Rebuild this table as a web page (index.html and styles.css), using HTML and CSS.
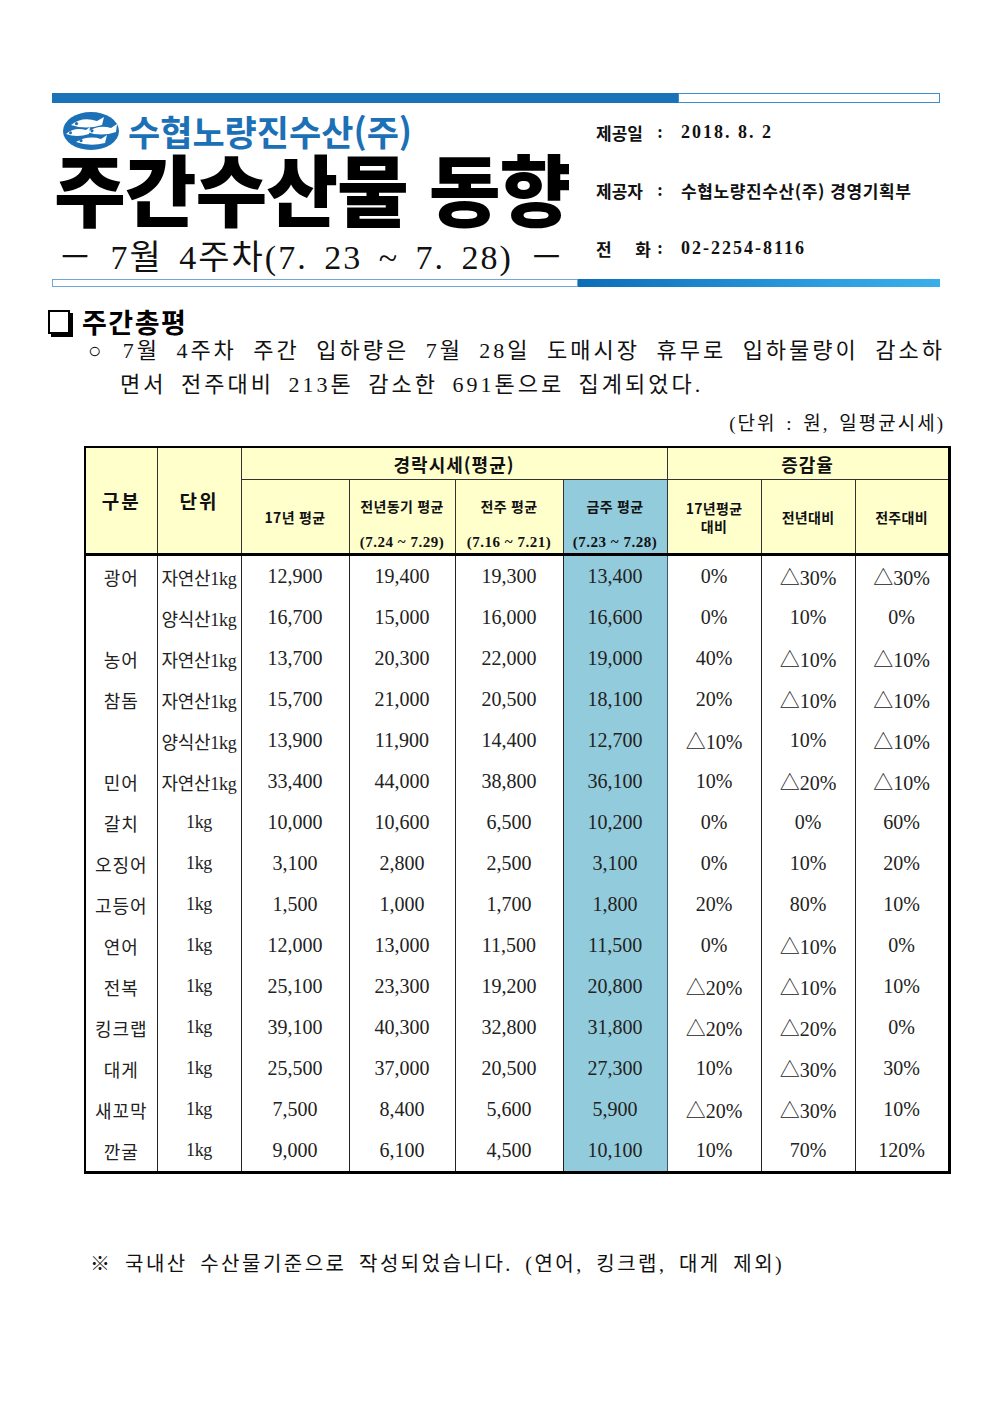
FILE: index.html
```html
<!DOCTYPE html>
<html lang="ko">
<head>
<meta charset="utf-8">
<title>주간수산물 동향</title>
<link rel="stylesheet" href="styles.css">
</head>
<body>
<div class="page">
  <div class="bar top-bar"><div class="fill"></div><div class="hollow"></div></div>
  <div class="head">
    <div class="head-left">
      <div class="logo">
        <svg class="logo-mark" viewBox="0 0 58 40" width="58" height="40" aria-hidden="true">
          <ellipse cx="29" cy="20" rx="28" ry="19" fill="#1c70b6"/>
          <path d="M9 14 Q20 5 35 10 L42 6 L40 14 Q24 19 9 14 Z" fill="#fff"/>
          <circle cx="14.5" cy="12.6" r="1.6" fill="#1c70b6"/>
          <path d="M25 21 Q37 13 49 17 L55 13 L54 21 Q39 26 25 21 Z" fill="#fff"/>
          <circle cx="30" cy="19.8" r="1.6" fill="#1c70b6"/>
          <path d="M4 23 Q12 16 24 19 L28 16 L27 23 Q15 27 4 23 Z" fill="#fff"/>
          <circle cx="8.5" cy="21.8" r="1.5" fill="#1c70b6"/>
          <path d="M14 31 Q26 24 39 28 L45 24 L43 32 Q28 36 14 31 Z" fill="#fff"/>
          <circle cx="19" cy="29.6" r="1.6" fill="#1c70b6"/>
        </svg>
        <span class="logo-text">수협노량진수산(주)</span>
      </div>
      <div class="title">주간수산물 동향</div>
      <div class="subtitle">－ 7월 4주차(7. 23 ~ 7. 28) －</div>
    </div>
    <div class="head-right">
      <div class="info-row"><span class="label">제공일</span><span class="colon">:</span><span class="val num">2018. 8. 2</span></div>
      <div class="info-row"><span class="label">제공자</span><span class="colon">:</span><span class="val kor">수협노량진수산(주) 경영기획부</span></div>
      <div class="info-row"><span class="label">전 화</span><span class="colon">:</span><span class="val num">02-2254-8116</span></div>
    </div>
  </div>
  <div class="bar bottom-bar"><div class="hollow"></div><div class="fill"></div></div>

  <div class="sec-title"><span class="box"></span><span class="sec-text">주간총평</span></div>
  <div class="para">
    <div class="line1">○ 7월 4주차 주간 입하량은 7월 28일 도매시장 휴무로 입하물량이 감소하</div>
    <div class="line2">면서 전주대비 213톤 감소한 691톤으로 집계되었다.</div>
  </div>
  <div class="unit">(단위 : 원, 일평균시세)</div>

  <table class="price">
    <colgroup>
      <col class="c1"><col class="c2"><col class="c3"><col class="c4"><col class="c5"><col class="c6"><col class="c7"><col class="c8"><col class="c9">
    </colgroup>
    <thead>
      <tr class="r1">
        <th rowspan="2" class="big">구분</th>
        <th rowspan="2" class="big">단위</th>
        <th colspan="4" class="group">경락시세(평균)</th>
        <th colspan="3" class="group">증감율</th>
      </tr>
      <tr class="r2">
        <th class="sub">17년 평균</th>
        <th class="sub"><div class="two"><span>전년동기 평균</span><span class="per">(7.24 ~ 7.29)</span></div></th>
        <th class="sub"><div class="two"><span>전주 평균</span><span class="per">(7.16 ~ 7.21)</span></div></th>
        <th class="sub cur"><div class="two"><span>금주 평균</span><span class="per">(7.23 ~ 7.28)</span></div></th>
        <th class="sub"><div class="stack"><span>17년평균</span><span>대비</span></div></th>
        <th class="sub">전년대비</th>
        <th class="sub">전주대비</th>
      </tr>
    </thead>
    <tbody>
      <tr><td class="name">광어</td><td class="unitc">자연산1kg</td><td>12,900</td><td>19,400</td><td>19,300</td><td class="cur">13,400</td><td>0%</td><td>△30%</td><td>△30%</td></tr>
      <tr><td class="name"></td><td class="unitc">양식산1kg</td><td>16,700</td><td>15,000</td><td>16,000</td><td class="cur">16,600</td><td>0%</td><td>10%</td><td>0%</td></tr>
      <tr><td class="name">농어</td><td class="unitc">자연산1kg</td><td>13,700</td><td>20,300</td><td>22,000</td><td class="cur">19,000</td><td>40%</td><td>△10%</td><td>△10%</td></tr>
      <tr><td class="name">참돔</td><td class="unitc">자연산1kg</td><td>15,700</td><td>21,000</td><td>20,500</td><td class="cur">18,100</td><td>20%</td><td>△10%</td><td>△10%</td></tr>
      <tr><td class="name"></td><td class="unitc">양식산1kg</td><td>13,900</td><td>11,900</td><td>14,400</td><td class="cur">12,700</td><td>△10%</td><td>10%</td><td>△10%</td></tr>
      <tr><td class="name">민어</td><td class="unitc">자연산1kg</td><td>33,400</td><td>44,000</td><td>38,800</td><td class="cur">36,100</td><td>10%</td><td>△20%</td><td>△10%</td></tr>
      <tr><td class="name">갈치</td><td class="unitc">1kg</td><td>10,000</td><td>10,600</td><td>6,500</td><td class="cur">10,200</td><td>0%</td><td>0%</td><td>60%</td></tr>
      <tr><td class="name">오징어</td><td class="unitc">1kg</td><td>3,100</td><td>2,800</td><td>2,500</td><td class="cur">3,100</td><td>0%</td><td>10%</td><td>20%</td></tr>
      <tr><td class="name">고등어</td><td class="unitc">1kg</td><td>1,500</td><td>1,000</td><td>1,700</td><td class="cur">1,800</td><td>20%</td><td>80%</td><td>10%</td></tr>
      <tr><td class="name">연어</td><td class="unitc">1kg</td><td>12,000</td><td>13,000</td><td>11,500</td><td class="cur">11,500</td><td>0%</td><td>△10%</td><td>0%</td></tr>
      <tr><td class="name">전복</td><td class="unitc">1kg</td><td>25,100</td><td>23,300</td><td>19,200</td><td class="cur">20,800</td><td>△20%</td><td>△10%</td><td>10%</td></tr>
      <tr><td class="name">킹크랩</td><td class="unitc">1kg</td><td>39,100</td><td>40,300</td><td>32,800</td><td class="cur">31,800</td><td>△20%</td><td>△20%</td><td>0%</td></tr>
      <tr><td class="name">대게</td><td class="unitc">1kg</td><td>25,500</td><td>37,000</td><td>20,500</td><td class="cur">27,300</td><td>10%</td><td>△30%</td><td>30%</td></tr>
      <tr><td class="name">새꼬막</td><td class="unitc">1kg</td><td>7,500</td><td>8,400</td><td>5,600</td><td class="cur">5,900</td><td>△20%</td><td>△30%</td><td>10%</td></tr>
      <tr><td class="name">깐굴</td><td class="unitc">1kg</td><td>9,000</td><td>6,100</td><td>4,500</td><td class="cur">10,100</td><td>10%</td><td>70%</td><td>120%</td></tr>
    </tbody>
  </table>

  <div class="note">※ 국내산 수산물기준으로 작성되었습니다. (연어, 킹크랩, 대게 제외)</div>
</div>
</body>
</html>
```

FILE: styles.css
```css
html, body {
  margin: 0;
  padding: 0;
  background: #fff;
}
body {
  font-family: "Noto Sans CJK KR", sans-serif;
  color: #111;
}
.page {
  width: 1001px;
  padding-top: 93px;
}

/* blue bars */
.bar {
  display: flex;
  margin-left: 52px;
  width: 888px;
}
.top-bar { height: 10px; }
.top-bar .fill { width: 626px; background: #1a72b8; }
.top-bar .hollow { flex: 1; border: 1px solid #3d8ccc; background: #fff; height: 8px; }
.bottom-bar { height: 8px; }
.bottom-bar .hollow { width: 524px; border: 1px solid #6fa8d8; background: #fff; height: 6px; }
.bottom-bar .fill { flex: 1; background: linear-gradient(90deg, #0b6db8, #2e9fe0 70%, #3aaeea); }

/* header */
.head {
  display: flex;
  margin-left: 52px;
  width: 888px;
  height: 176px;
}
.head-left { width: 525px; }
.logo {
  display: flex;
  align-items: center;
  gap: 8px;
  margin: 9px 0 0 10px;
  height: 38px;
}
.logo-mark { display: block; }
.logo-text {
  font-size: 35px;
  font-weight: 700;
  color: #1c70b6;
  line-height: 38px;
}
.title {
  font-size: 78px;
  font-weight: 900;
  line-height: 74px;
  height: 76px;
  margin-left: 2px;
  letter-spacing: -1px;
  color: #000;
  white-space: nowrap;
}
.subtitle {
  font-family: "Liberation Serif", "Noto Sans CJK KR", serif;
  font-size: 34px;
  line-height: 40px;
  margin: 12px 0 0 6px;
  letter-spacing: 2px;
  word-spacing: 6px;
  white-space: nowrap;
}
.head-right {
  margin-left: 19px;
  padding-top: 0;
}
.info-row {
  display: flex;
  align-items: center;
  height: 58px;
  white-space: nowrap;
}
.label {
  width: 55px;
  font-size: 17px;
  font-weight: 700;
  text-align: justify;
  text-align-last: justify;
}
.colon {
  width: 30px;
  font-family: "Liberation Serif", serif;
  font-weight: 700;
  font-size: 18px;
  padding-left: 6px;
  box-sizing: border-box;
}
.val.num {
  font-family: "Liberation Serif", serif;
  font-size: 18px;
  font-weight: 700;
  letter-spacing: 2px;
}
.val.kor {
  font-size: 17px;
  font-weight: 700;
  letter-spacing: 0.6px;
}

/* section */
.sec-title {
  display: flex;
  align-items: center;
  margin: 21px 0 0 48px;
  height: 28px;
}
.box {
  width: 18px;
  height: 20px;
  border: 2px solid #000;
  box-shadow: 3px 3px 0 #000;
  box-sizing: content-box;
}
.sec-text {
  margin-left: 12px;
  font-size: 27px;
  font-weight: 700;
  line-height: 28px;
  letter-spacing: 1.5px;
  color: #000;
}
.para {
  margin: -2px 0 0 88px;
  width: 857px;
  font-family: "Liberation Serif", "Noto Sans CJK KR", serif;
  font-size: 22px;
  line-height: 34px;
  color: #111;
  letter-spacing: 3px;
  word-spacing: 6px;
  white-space: nowrap;
}
.line1 {
  text-align: justify;
  text-align-last: justify;
}
.line2 { padding-left: 32px; }
.unit {
  width: 945px;
  margin-top: 7px;
  text-align: right;
  font-family: "Liberation Serif", "Noto Sans CJK KR", serif;
  font-size: 19px;
  line-height: 30px;
  letter-spacing: 2px;
  word-spacing: 3px;
}

/* table */
.price {
  margin: 7px 0 0 84px;
  border-collapse: collapse;
  table-layout: fixed;
  width: 864px;
  border-top: 2px solid #000;
  border-left: 2px solid #000;
  border-right: 3px solid #000;
  border-bottom: 3px solid #000;
  font-family: "Liberation Serif", "Noto Sans CJK KR", serif;
  color: #222;
}
.c1 { width: 72px; }
.c2 { width: 84px; }
.c3 { width: 108px; }
.c4 { width: 106px; }
.c5 { width: 108px; }
.c6 { width: 104px; }
.c7 { width: 94px; }
.c8 { width: 94px; }
.c9 { width: 94px; }

.price th {
  background: #ffffcc;
  border: 1px solid #333;
  padding: 0;
  font-family: "Noto Sans CJK KR", sans-serif;
  font-weight: 700;
  color: #111;
  text-align: center;
}
.price th.cur { background: #92cbdb; }
.r1 th { height: 31px; }
.r2 th { height: 73px; border-bottom: 3px solid #000; }
.r1 th.big { border-bottom: 3px solid #000; font-size: 19px; letter-spacing: 2px; }
.group { font-size: 18px; letter-spacing: 1px; }
.sub { font-size: 14px; letter-spacing: 0.3px; vertical-align: middle; }
.two {
  height: 73px;
  display: flex;
  flex-direction: column;
  justify-content: space-between;
  padding: 16px 0 1px;
  box-sizing: border-box;
  line-height: 20px;
}
.per {
  font-family: "Liberation Serif", serif;
  font-size: 15px;
  letter-spacing: 0.5px;
  white-space: nowrap;
}
.stack {
  display: flex;
  flex-direction: column;
  line-height: 18px;
}

.price td {
  height: 41px;
  padding: 0;
  text-align: center;
  border-left: 1px solid #222;
  border-right: 1px solid #222;
  font-size: 20px;
  white-space: nowrap;
}
.price td.cur {
  background: #92cbdb;
  border-left-color: #3c5a66;
  border-right-color: #3c5a66;
}
.price td.name {
  font-family: "Noto Sans CJK KR", sans-serif;
  font-size: 18px;
  letter-spacing: 1px;
  color: #222;
}
.price td.unitc {
  font-size: 18px;
  letter-spacing: -0.3px;
}

.note {
  margin: 75px 0 0 90px;
  font-family: "Liberation Serif", "Noto Sans CJK KR", serif;
  font-size: 20px;
  line-height: 30px;
  letter-spacing: 2.5px;
  word-spacing: 5px;
  color: #111;
}
```
